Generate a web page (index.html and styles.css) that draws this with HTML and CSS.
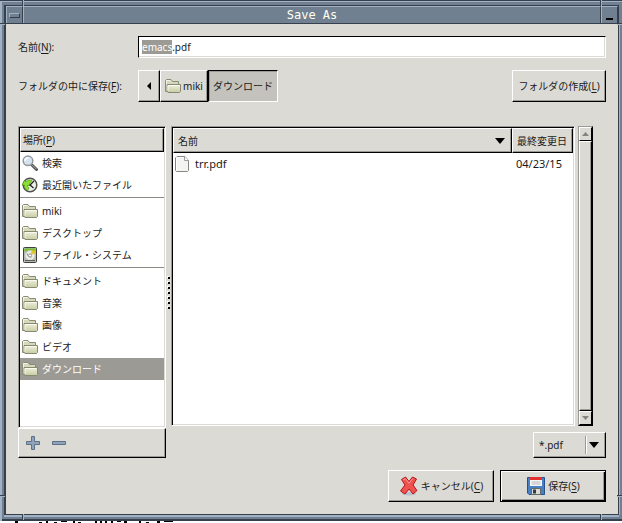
FILE: index.html
```html
<!DOCTYPE html>
<html lang="ja">
<head>
<meta charset="UTF-8">
<meta name="viewport" content="width=device-width, initial-scale=1.0">
<title>Save As</title>
<link rel="stylesheet" href="styles.css">
</head>
<body>
    <!-- Shared icon shapes -->
    <svg class="sprite" aria-hidden="true">
        <defs>
            <linearGradient id="folderFill" x1="0" y1="0" x2="0" y2="1">
                <stop offset="0" stop-color="#f0f1dc"/>
                <stop offset="1" stop-color="#c6cca4"/>
            </linearGradient>
            <symbol id="folder" viewBox="0 0 16 16">
                <path d="M.5 13.500V2.500l1-1h4.500l1.500 2h6v10z" fill="#d5d8bb" stroke="#898d75"/>
                <path d="M1.500 12.500v-10H5.500" fill="none" stroke="#f3f4e8"/>
                <path d="M3 14.500l-1-1.500V6.500h13.500v7l-1 1z" fill="url(#folderFill)" stroke="#858a70"/>
                <path d="M3 13V7.500h11.500" fill="none" stroke="#fafaf0"/>
            </symbol>
        </defs>
    </svg>

    <div class="window">
        <header class="titlebar">
            <button type="button" class="title-button" aria-label="Menu"><span class="menu-mark"></span></button>
            <h1 class="title">Save As</h1>
            <button type="button" class="title-button" aria-label="Minimize"><span class="min-mark"></span></button>
        </header>

        <form class="dialog" id="saveForm">
            <div class="row name-row">
                <label class="row-label" for="fileName">名前(<u>N</u>):</label>
                <input class="name-input" id="fileName" type="text" value="emacs.pdf" autocomplete="off" spellcheck="false">
            </div>

            <div class="row path-row">
                <span class="row-label" id="pathLabel">フォルダの中に保存(<u>F</u>):</span>
                <nav class="path" aria-labelledby="pathLabel">
                    <button type="button" class="button path-back" aria-label="Back">
                        <svg width="4" height="8" viewBox="0 0 4 8"><path d="M4 0v8L0 4z"/></svg>
                    </button>
                    <button type="button" class="button path-home"><svg class="icon"><use href="#folder"/></svg>miki</button>
                    <button type="button" class="button path-current" aria-pressed="true">ダウンロード</button>
                </nav>
                <button type="button" class="button new-folder"><span>フォルダの作成(<u>L</u>)</span></button>
            </div>

            <div class="browser">
                <section class="places">
                    <div class="well places-well">
                        <h2 class="places-head"><span>場所(<u>P</u>)</span></h2>
                        <ul class="places-list">
                            <li><button type="button" class="place">
                                <svg class="icon" viewBox="0 0 16 16">
                                    <path d="M10 10l4.500 4.500" stroke="#555" stroke-width="3" stroke-linecap="round"/>
                                    <path d="M10.500 10.200l3.500 3.500" stroke="#aaa" stroke-linecap="round"/>
                                    <circle cx="6" cy="5.800" r="4.800" fill="#d5e3f0" stroke="#95989a" stroke-width="1.500"/>
                                    <path d="M3 6c0-2 1.500-3 3.200-3" fill="none" stroke="#fff" stroke-width="1.500"/>
                                </svg>検索</button></li>
                            <li><button type="button" class="place">
                                <svg class="icon" viewBox="0 0 16 16">
                                    <circle cx="8" cy="8" r="6.800" fill="#eef0ea" stroke="#4f534c" stroke-width="1.500"/>
                                    <path d="M0 8l2.500-4.500L4 5c2-2 4-2.500 6-1.500L7.500 6.500 9 8.500H5L7 11l-1.500 2.500C3 12.500 2.500 10 2.500 8z" fill="#8ae234" stroke="#4e9a06" stroke-width=".7"/>
                                    <path d="M12 4L8 8l3.500 3" fill="none" stroke="#222" stroke-width="1.300"/>
                                </svg>最近開いたファイル</button></li>
                            <li class="separator"></li>
                            <li><button type="button" class="place"><svg class="icon"><use href="#folder"/></svg>miki</button></li>
                            <li><button type="button" class="place"><svg class="icon"><use href="#folder"/></svg>デスクトップ</button></li>
                            <li><button type="button" class="place">
                                <svg class="icon" viewBox="0 0 16 16">
                                    <rect x="1.500" y=".5" width="13" height="15" rx="1" fill="#b4b7b0" stroke="#3f423c"/>
                                    <rect x="2.500" y="1.500" width="11" height="3" fill="#73c22a"/>
                                    <circle cx="8" cy="8.500" r="5" fill="#e9ebe6" stroke="#c4c7c0"/>
                                    <path d="M8 8.500l2-5h3.500V6z" fill="#e5c52e"/>
                                    <path d="M5 6.500l1.500 3 3 .5" fill="none" stroke="#8b8e88"/>
                                    <circle cx="8" cy="8.500" r="1.500" fill="#fff" stroke="#999"/>
                                    <path d="M3 13.500h10" stroke="#5b5e58"/>
                                </svg>ファイル・システム</button></li>
                            <li class="separator"></li>
                            <li><button type="button" class="place"><svg class="icon"><use href="#folder"/></svg>ドキュメント</button></li>
                            <li><button type="button" class="place"><svg class="icon"><use href="#folder"/></svg>音楽</button></li>
                            <li><button type="button" class="place"><svg class="icon"><use href="#folder"/></svg>画像</button></li>
                            <li><button type="button" class="place"><svg class="icon"><use href="#folder"/></svg>ビデオ</button></li>
                            <li><button type="button" class="place selected"><svg class="icon"><use href="#folder"/></svg>ダウンロード</button></li>
                        </ul>
                    </div>
                    <div class="places-tools">
                        <button type="button" class="tool" aria-label="Add">
                            <svg width="14" height="14" viewBox="0 0 14 14"><path d="M5.500.5h3v5h5v3h-5v5h-3v-5h-5v-3h5z" fill="#8fa3bb" stroke="#5c7088"/></svg>
                        </button>
                        <button type="button" class="tool" aria-label="Remove">
                            <svg width="14" height="14" viewBox="0 0 14 14"><path d="M.5 5.500h13v3H.5z" fill="#8fa3bb" stroke="#5c7088"/></svg>
                        </button>
                    </div>
                </section>

                <div class="grip">
                    <svg width="3" height="33" viewBox="0 0 3 33">
                        <path d="M0 0h2v1H1v1H0zM0 5h2v1H1v1H0zM0 10h2v1H1v1H0zM0 15h2v1H1v1H0zM0 20h2v1H1v1H0zM0 25h2v1H1v1H0zM0 30h2v1H1v1H0z" fill="#fff"/>
                        <path d="M1 1h2v2H1zM1 6h2v2H1zM1 11h2v2H1zM1 16h2v2H1zM1 21h2v2H1zM1 26h2v2H1zM1 31h2v2H1z"/>
                    </svg>
                </div>

                <section class="files">
                    <div class="files-view">
                        <div class="well files-well">
                            <table class="files-table">
                                <thead>
                                    <tr>
                                        <th class="col-name"><div class="col-head">名前<svg width="10" height="6" viewBox="0 0 10 6"><path d="M0 0h10L5 6z"/></svg></div></th>
                                        <th class="col-date"><div class="col-head">最終変更日</div></th>
                                    </tr>
                                </thead>
                                <tbody>
                                    <tr>
                                        <td><div class="file">
                                            <svg class="icon" viewBox="0 0 16 16">
                                                <path d="M2 .5h8l3.500 4v10l-1 1H1.500l-1-1V2z" fill="#f4f4f2" stroke="#858783"/>
                                                <path d="M9.500.5v4h4" fill="#fff" stroke="#999b96"/>
                                                <path d="M1.500 14V1.500h7" fill="none" stroke="#fff"/>
                                            </svg>trr.pdf</div></td>
                                        <td class="date">04/23/15</td>
                                    </tr>
                                </tbody>
                            </table>
                        </div>
                        <div class="scrollbar">
                            <button type="button" class="scroll-button" aria-label="Scroll up"><svg width="7" height="4" viewBox="0 0 7 4"><path d="M0 4h7L3.500 0z" fill="#85847e"/></svg></button>
                            <div class="scroll-thumb"></div>
                            <button type="button" class="scroll-button" aria-label="Scroll down"><svg width="7" height="4" viewBox="0 0 7 4"><path d="M0 0h7L3.500 4z" fill="#85847e"/></svg></button>
                        </div>
                    </div>
                    <div class="filter">
                        <select class="button filter-select" aria-label="File type">
                            <option>*.pdf</option>
                        </select>
                        <span class="filter-arrow"><svg width="10" height="6" viewBox="0 0 10 6"><path d="M0 0h10L5 6z"/></svg></span>
                    </div>
                </section>
            </div>

            <div class="actions">
                <button type="button" class="button action">
                    <svg class="action-icon" viewBox="0 0 20 20">
                        <ellipse cx="10" cy="17.800" rx="7" ry="1.700" fill="#b9c3cc"/>
                        <path d="M2.500 3.500L6.500 1 10 5.500 13.500 1l4 2-3.500 6 4 5.500-4 3.500-4-5-4 5-4.500-3L6 9z" fill="#ef5350" stroke="#b3141a" stroke-linejoin="round"/>
                        <path d="M4 4l2.300-1.500L10 7.200l3.800-4.700" fill="none" stroke="#ff9a94"/>
                    </svg><span>キャンセル(<u>C</u>)</span>
                </button>
                <button type="submit" class="button action default">
                    <svg class="action-icon" viewBox="0 0 20 20">
                        <path d="M1.500 1.500h17v17H3l-1.500-1.500z" fill="#4a7fc1" stroke="#27508c"/>
                        <path d="M4 1h12v9H4z" fill="#f7f7f7"/>
                        <path d="M4 1h12v3H4z" fill="#e33030"/>
                        <path d="M5.500 6h9M5.500 8h9" stroke="#b5b5b5"/>
                        <path d="M5.500 12.500h9v6h-9z" fill="#d8dbd6" stroke="#666a66"/>
                        <path d="M7 13.500h3v4H7z" fill="#333b45"/>
                    </svg><span>保存(<u>S</u>)</span>
                </button>
            </div>
        </form>

        <!-- Resize corner marks on the frame -->
        <span class="tick tick-top tick-left"></span>
        <span class="tick tick-top tick-right"></span>
        <span class="tick tick-bottom tick-left"></span>
        <span class="tick tick-bottom tick-right"></span>
        <span class="notch notch-top notch-left"></span>
        <span class="notch notch-top notch-right"></span>
        <span class="notch notch-bottom notch-left"></span>
        <span class="notch notch-bottom notch-right"></span>
    </div>

    <!-- Sliver of the window underneath -->
    <div class="behind" aria-hidden="true">
        <svg width="180" height="2" viewBox="0 0 180 2"><path d="M15 0h3v2h-3zM39 1h3v1h-3zM46 0h2v2h-2zM54 1h3v1h-3zM61 0h6v1h-6zM73 0h2v2h-2zM78 1h3v1h-3zM95 0h2v2h-2zM100 0h2v2h-2zM105 0h2v2h-2zM111 0h2v2h-2zM117 0h4v1h-4zM124 0h3v2h-3zM139 0h2v2h-2zM146 1h3v1h-3zM157 0h3v2h-3zM164 0h9v1h-9z"/></svg>
    </div>

    <script>
        // Select the base name and leave the extension alone
        const fileName = document.getElementById("fileName");
        fileName.focus();
        fileName.setSelectionRange(0, fileName.value.lastIndexOf("."));

        document.getElementById("saveForm").addEventListener("submit", event => event.preventDefault());
    </script>
</body>
</html>
```
FILE: styles.css
```css
* {
box-sizing: border-box;
}

body {
margin: 0;
min-height: 100vh;
display: flex;
flex-direction: column;
background-color: #ffffff;
color: #1a1a1a;
font-family: "Noto Sans", "Noto Sans CJK JP", sans-serif;
font-size: 10px;
line-height: 14px;
}

button, input, select {
font: inherit;
color: inherit;
margin: 0;
padding: 0;
border: none;
border-radius: 0;
background: none;
outline: none;
}

svg {
display: block;
flex: none;
}

u {
text-underline-offset: 2px;
}

.sprite {
position: absolute;
width: 0;
height: 0;
}

.icon {
width: 16px;
height: 16px;
}

/* Window frame */
.window {
position: relative;
flex: 1;
display: flex;
flex-direction: column;
padding: 5px 3px 6px 4px;
background-color: #708090;
box-shadow: inset 0 1px #36404c, inset 2px 2px #a2b2c6, inset 0 -2px #36404c;
}

.tick, .notch {
position: absolute;
background-color: #36404c;
}

.tick {
width: 2px;
height: 6px;
border-right: 1px solid #a2b2c6;
}

.notch {
width: 5px;
height: 2px;
border-bottom: 1px solid #a2b2c6;
}

.tick-top { top: 0; }
.tick-bottom { bottom: 1px; }
.tick-left { left: 22px; }
.tick-right { right: 20px; }
.notch-top { top: 23px; }
.notch-bottom { bottom: 24px; }
.notch-left { left: 0; }
.notch-right { right: 0; }

.titlebar {
display: flex;
height: 19px;
border: 1px solid #36404c;
border-left-width: 2px;
background-color: #708090;
}

.title {
flex: 1;
margin: 0;
border-top: 1px solid #a2b2c6;
border-left: 1px solid #a2b2c6;
border-right: 1px solid #36404c;
color: #fffff0;
font-family: "DejaVu Sans Mono", monospace;
font-size: 12px;
font-weight: normal;
line-height: 16px;
text-align: center;
}

.title-button {
display: flex;
justify-content: center;
align-items: center;
width: 17px;
border-top: 1px solid #a2b2c6;
border-left: 1px solid #a2b2c6;
border-right: 1px solid #36404c;
}

.menu-mark {
width: 11px;
height: 5px;
border: 1px solid;
border-color: #a2b2c6 #36404c #36404c #a2b2c6;
}

.min-mark {
width: 7px;
height: 2px;
margin-top: 8px;
background-color: #000000;
}

.dialog {
flex: 1;
display: flex;
flex-direction: column;
padding: 12px;
border: 0 solid #36404c;
border-left-width: 2px;
border-right-width: 1px;
border-bottom-width: 1px;
box-shadow: 0 2px #a2b2c6, 1px 0 #a2b2c6;
background-color: #dcdad5;
}

/* Bevels */
.button {
display: flex;
justify-content: center;
align-items: center;
border: 1px solid;
border-color: #ffffff #000000 #000000 #ffffff;
box-shadow: inset -1px -1px #9c9a94;
background-color: #dcdad5;
}

.well {
padding: 1px;
border: 1px solid;
border-color: #9c9a94 #ffffff #ffffff #9c9a94;
box-shadow: inset 1px 1px #000000, inset -1px -1px #dcdad5;
background-color: #ffffff;
}

/* File name and path rows */
.row {
display: flex;
align-items: center;
}

.row-label {
width: 120px;
}

.name-row {
margin-bottom: 12px;
}

.name-input {
flex: 1;
min-width: 0;
height: 22px;
padding: 0 3px;
border: 1px solid;
border-color: #000000 #ffffff #ffffff #000000;
box-shadow: inset -1px -1px #dcdad5;
background-color: #ffffff;
caret-color: transparent;
}

.name-input::selection {
background-color: #9c9a94;
color: #ffffff;
}

.path-row {
margin-bottom: 24px;
}

.path {
flex: 1;
display: flex;
}

.path .button, .new-folder {
height: 32px;
}

.path-back {
width: 22px;
}

.path-home {
width: 48px;
gap: 2px;
}

.path .path-current {
width: 70px;
border-color: #000000 #ffffff #ffffff #000000;
box-shadow: inset 1px 1px #9c9a94;
background-color: #c4c2bd;
}

.new-folder {
width: 94px;
}

/* Places and files */
.browser {
flex: 1;
display: flex;
margin-bottom: 12px;
}

.places {
width: 148px;
display: flex;
flex-direction: column;
}

.places-well {
flex: 1;
}

.places-head {
display: flex;
align-items: center;
height: 24px;
margin: 0;
padding: 0 2px;
border: 1px solid;
border-color: #ffffff #000000 #000000 #ffffff;
box-shadow: inset -1px -1px #9c9a94;
background-color: #dcdad5;
font-size: 10px;
font-weight: normal;
}

.places-list {
margin: 0;
padding: 0;
list-style: none;
}

.place {
display: flex;
align-items: center;
gap: 4px;
width: 100%;
height: 22px;
padding: 0 2px;
}

.place.selected {
background-color: #9c9a94;
color: #ffffff;
}

.separator {
height: 4px;
padding-top: 1px;
}

.separator::before {
content: "";
display: block;
border-top: 1px solid #8c8a84;
}

.places-tools {
display: flex;
align-items: center;
gap: 12px;
height: 30px;
padding: 0 7px;
border: 1px solid;
border-color: #ffffff #000000 #000000 #ffffff;
box-shadow: inset -1px -1px #9c9a94;
}

.grip {
display: flex;
justify-content: center;
align-items: center;
width: 5px;
}

.files {
flex: 1;
display: flex;
flex-direction: column;
gap: 6px;
}

.files-view {
flex: 1;
display: flex;
gap: 3px;
margin-right: 13px;
}

.files-well {
flex: 1;
}

.files-table {
width: 100%;
border-collapse: collapse;
table-layout: fixed;
}

th, td {
padding: 0;
font-weight: normal;
text-align: left;
}

.col-date {
width: 61px;
}

.col-head {
display: flex;
justify-content: space-between;
align-items: center;
height: 25px;
padding: 0 6px 0 4px;
border: 1px solid;
border-color: #ffffff #000000 #000000 #ffffff;
box-shadow: inset -1px -1px #9c9a94;
background-color: #dcdad5;
white-space: nowrap;
}

.file {
display: flex;
align-items: center;
gap: 4px;
height: 22px;
padding: 0 2px;
font-size: 11px;
}

.date {
padding-left: 4px;
font-size: 11px;
}

.scrollbar {
width: 15px;
display: flex;
flex-direction: column;
border: 1px solid;
border-color: #9c9a94 #000000 #000000 #9c9a94;
background-color: #c4c2bd;
}

.scroll-button {
display: flex;
justify-content: center;
align-items: center;
height: 14px;
border: 1px solid;
border-color: #ffffff #000000 #000000 #ffffff;
background-color: #dcdad5;
}

.scroll-thumb {
flex: 1;
border: 1px solid;
border-color: #ffffff #000000 #000000 #ffffff;
box-shadow: inset -1px -1px #9c9a94;
background-color: #dcdad5;
}

.filter {
position: relative;
align-self: flex-end;
width: 73px;
}

.filter-select {
appearance: none;
width: 100%;
height: 26px;
padding: 0 24px 0 5px;
}

/* Arrow lies over the select */
.filter-arrow {
position: absolute;
top: 4px;
right: 7px;
bottom: 4px;
display: flex;
align-items: center;
padding-left: 3px;
border-left: 1px solid #9c9a94;
box-shadow: inset 1px 0 #ffffff;
pointer-events: none;
}

/* Bottom buttons */
.actions {
display: flex;
justify-content: flex-end;
gap: 6px;
}

.action {
width: 106px;
height: 32px;
gap: 2px;
}

.action-icon {
width: 20px;
height: 20px;
}

.default {
border-color: #000000;
box-shadow: inset 1px 1px #ffffff, inset -1px -1px #000000, inset -2px -2px #9c9a94;
}

.behind {
height: 2px;
overflow: hidden;
}
```
